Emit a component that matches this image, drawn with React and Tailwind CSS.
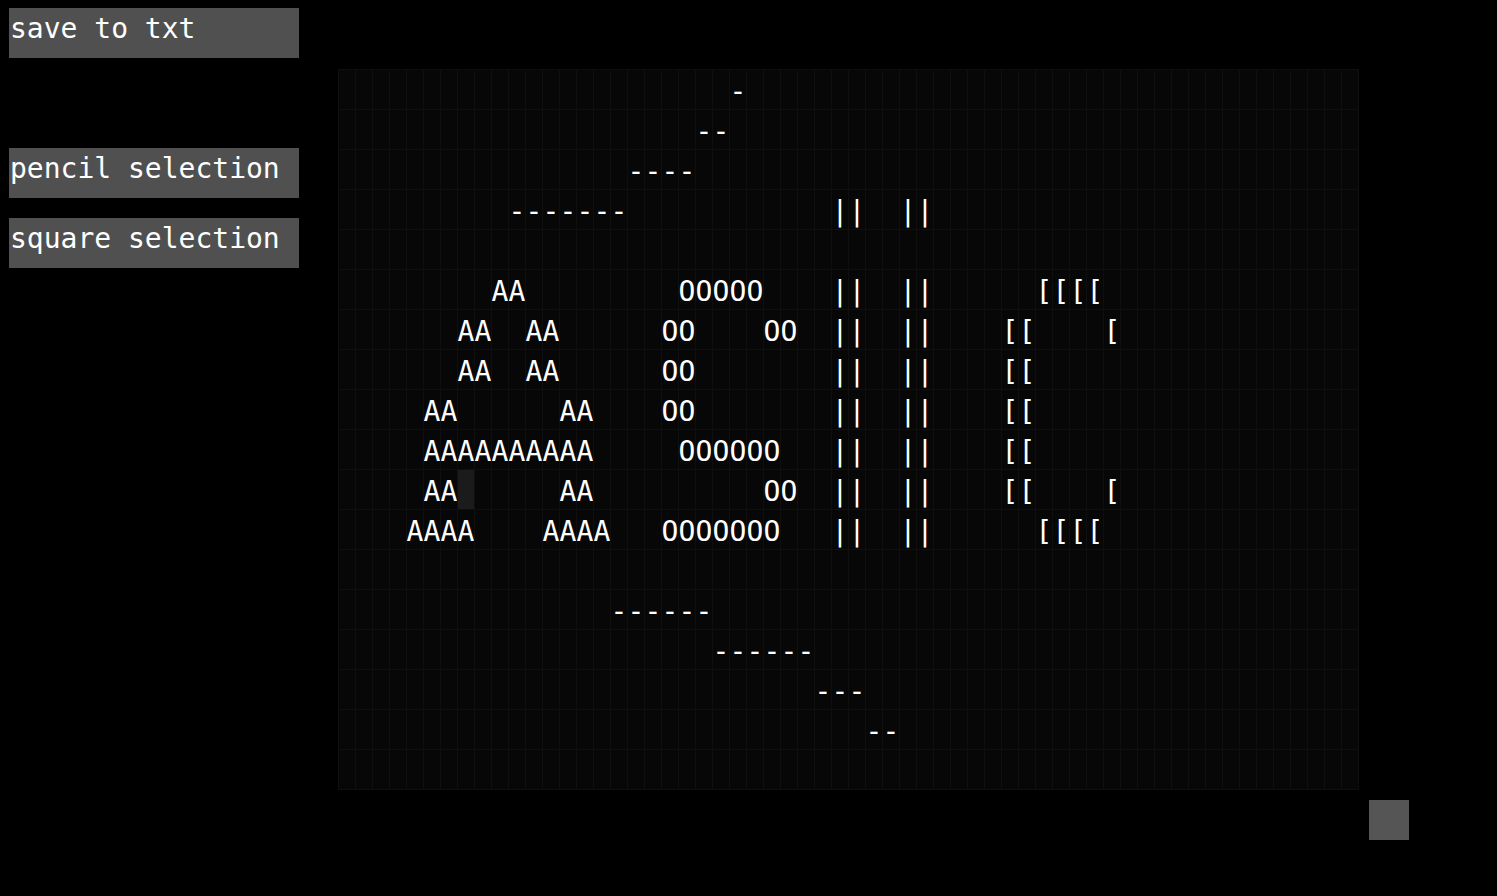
import React, { useState } from "react";

const COLS = 60;
const ROWS = 18;

// [row, col, text]
const segments = [
  [0, 23, "-"],
  [1, 21, "--"],
  [2, 17, "----"],
  [3, 10, "-------"],
  [3, 29, "||  ||"],
  [5, 9, "AA"],
  [5, 20, "OOOOO"],
  [5, 29, "||  ||"],
  [5, 41, "[[[["],
  [6, 7, "AA  AA"],
  [6, 19, "OO    OO"],
  [6, 29, "||  ||"],
  [6, 39, "[[    ["],
  [7, 7, "AA  AA"],
  [7, 19, "OO"],
  [7, 29, "||  ||"],
  [7, 39, "[["],
  [8, 5, "AA      AA"],
  [8, 19, "OO"],
  [8, 29, "||  ||"],
  [8, 39, "[["],
  [9, 5, "AAAAAAAAAA"],
  [9, 20, "OOOOOO"],
  [9, 29, "||  ||"],
  [9, 39, "[["],
  [10, 5, "AA      AA"],
  [10, 25, "OO"],
  [10, 29, "||  ||"],
  [10, 39, "[[    ["],
  [11, 4, "AAAA    AAAA"],
  [11, 19, "OOOOOOO"],
  [11, 29, "||  ||"],
  [11, 41, "[[[["],
  [13, 16, "------"],
  [14, 22, "------"],
  [15, 28, "---"],
  [16, 31, "--"],
];

function buildGrid() {
  const grid = Array.from({ length: ROWS }, () => Array(COLS).fill(" "));
  segments.forEach(([r, c, text]) => {
    text.split("").forEach((ch, i) => {
      grid[r][c + i] = ch;
    });
  });
  return grid;
}

function ToolButton({ children, className = "" }) {
  return (
    <button
      className={
        "w-[290px] h-[50px] bg-[#505050] text-white text-left text-[28px] leading-[32px] pl-px pt-[5px] flex items-start " +
        className
      }
      style={{ fontFamily: '"DejaVu Sans Mono", monospace' }}
    >
      {children}
    </button>
  );
}

export default function App() {
  const [grid] = useState(buildGrid);
  const [selected] = useState({ r: 10, c: 7 });

  return (
    <div className="bg-black w-full h-[896px] flex flex-row overflow-hidden">
      <div className="flex flex-col pt-[8px] pl-[9px] w-[299px] shrink-0">
        <ToolButton>save to txt</ToolButton>
        <ToolButton className="mt-[90px]">pencil selection</ToolButton>
        <ToolButton className="mt-[20px]">square selection</ToolButton>
      </div>

      <div className="flex flex-row items-start pt-[69px] pl-[39px]">
        <div
          className="grid grid-cols-[repeat(60,17px)] grid-rows-[repeat(18,40px)] bg-[#070707] border-r border-b border-[#0f0f0f] text-white text-[28px]"
          style={{ fontFamily: '"DejaVu Sans Mono", monospace' }}
        >
          {grid.map((row, r) =>
            row.map((ch, c) => (
              <div
                key={r + "-" + c}
                className={
                  "border-l border-t border-[#0f0f0f] flex items-center justify-center leading-[40px] whitespace-pre pt-[4px] " +
                  (selected.r === r && selected.c === c ? "bg-[#1b1b1b]" : "")
                }
              >
                {ch}
              </div>
            ))
          )}
        </div>
        <div className="w-[40px] h-[40px] bg-[#555555] ml-[10px] mt-[731px] shrink-0" />
      </div>
    </div>
  );
}
